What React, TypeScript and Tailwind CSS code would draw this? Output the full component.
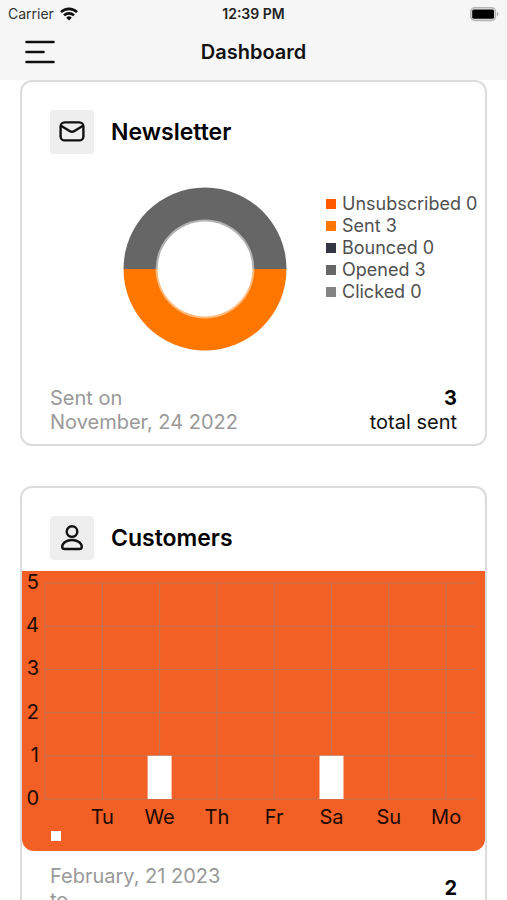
import type { ReactNode } from "react";

const legend = [
  { label: "Unsubscribed", value: 0, swatch: "bg-[#ff5a00]" },
  { label: "Sent", value: 3, swatch: "bg-[#ff7700]" },
  { label: "Bounced", value: 0, swatch: "bg-[#343741]" },
  { label: "Opened", value: 3, swatch: "bg-[#666666]" },
  { label: "Clicked", value: 0, swatch: "bg-[#838383]" },
];

const days = [
  { day: "Tu", count: 0 },
  { day: "We", count: 1 },
  { day: "Th", count: 0 },
  { day: "Fr", count: 0 },
  { day: "Sa", count: 1 },
  { day: "Su", count: 0 },
  { day: "Mo", count: 0 },
];

const chart = { left: 23, right: 454, top: 12, bottom: 228, max: 5 };
const columnStep = 57.3;

function columnX(index: number) {
  return chart.left + columnStep * index;
}

function valueY(value: number) {
  return chart.bottom - ((chart.bottom - chart.top) / chart.max) * value;
}

function StatusBar() {
  return (
    <div className="grid h-7 grid-cols-3 items-center px-2 text-[14px] leading-4">
      <div className="flex items-center gap-1.5 text-[#333]">
        <span>Carrier</span>
        <svg width="18" height="14" viewBox="0 0 18 14" fill="none" stroke="#111" strokeWidth="2.6" aria-label="Wi-Fi">
          <path d="M1 5.1a11.6 11.6 0 0 1 16 0" />
          <path d="M4 8.4a7.3 7.3 0 0 1 10 0" />
          <path d="M9 13.6 6.2 10.7a4 4 0 0 1 5.6 0Z" fill="#111" stroke="none" />
        </svg>
      </div>
      <span className="text-center font-semibold text-[#222]">12:39 PM</span>
      <svg className="justify-self-end" width="30" height="15" viewBox="0 0 30 15" aria-label="Battery full">
        <rect x="1.8" y="0.8" width="24.6" height="12.6" rx="4" fill="#eee" stroke="#b4b4b4" strokeWidth="1.6" />
        <rect x="3.2" y="2.4" width="21.8" height="9.4" rx="1.5" fill="#000" />
        <path d="M28 4.7a2.6 2.6 0 0 1 0 4.6Z" fill="#aaa" />
      </svg>
    </div>
  );
}

function NavBar() {
  return (
    <div className="grid h-[52px] grid-cols-[40px_1fr_40px] items-start px-5 pt-1">
      <button type="button" aria-label="Open menu" className="flex h-10 w-10 items-center justify-center">
        <svg width="30" height="24" viewBox="0 0 30 24" stroke="#111" strokeWidth="2.6" strokeLinecap="round">
          <path d="M1.5 2h27M1.5 12h17M1.5 22h27" />
        </svg>
      </button>
      <h1 className="text-center text-[20px] leading-10 font-semibold text-[#111]">Dashboard</h1>
    </div>
  );
}

function CardHeader({ title, icon }: { title: string; icon: ReactNode }) {
  return (
    <div className="flex items-center gap-[17px] px-7 pt-7">
      <div className="flex size-11 items-center justify-center rounded bg-[#eeeeee]">{icon}</div>
      <h2 className="text-[23px] leading-7 font-semibold text-black">{title}</h2>
    </div>
  );
}

function EnvelopeIcon() {
  return (
    <svg width="26" height="22" viewBox="0 0 26 22" fill="none" stroke="#111" strokeWidth="2.4" strokeLinejoin="round" aria-hidden="true">
      <rect x="1.6" y="1.4" width="22.8" height="18" rx="4" />
      <path d="M2.4 5 10.6 10a4.6 4.6 0 0 0 4.8 0L23.6 5" />
    </svg>
  );
}

function PersonIcon() {
  return (
    <svg width="24" height="26" viewBox="0 0 24 26" fill="none" stroke="#111" strokeWidth="2.4" aria-hidden="true">
      <circle cx="12" cy="6.6" r="5.3" />
      <path d="M12 15c-5.3 0-9.8 3.3-9.8 6.8 0 1.4.9 2.2 2.3 2.2h15c1.4 0 2.3-.8 2.3-2.2 0-3.5-4.5-6.8-9.8-6.8Z" />
    </svg>
  );
}

function NewsletterCard() {
  return (
    <section className="rounded-xl border-2 border-[#dcdcdc] bg-white">
      <CardHeader title="Newsletter" icon={<EnvelopeIcon />} />
      <div className="flex justify-between pt-[33px] pr-2.5 pl-[101px]">
        <svg width="164" height="164" viewBox="0 0 164 164" role="img" aria-label="Newsletter breakdown">
          <path d="M0.5 82a81.5 81.5 0 0 1 163 0Z" fill="#666666" />
          <path d="M0.5 82a81.5 81.5 0 0 0 163 0Z" fill="#ff7700" />
          <circle cx="82" cy="82" r="49.4" fill="#fff" fillOpacity="0.5" />
          <circle cx="82" cy="82" r="47.4" fill="#fff" />
        </svg>
        <ul className="w-[149px] pt-1.5 text-[18px] leading-[22px] text-[#505050]">
          {legend.map((item) => (
            <li key={item.label} className="flex items-center gap-1.5 whitespace-nowrap">
              <span className={`size-2.5 shrink-0 ${item.swatch}`} />
              {item.label} {item.value}
            </li>
          ))}
        </ul>
      </div>
      <div className="flex justify-between px-7 pt-[35px] pb-2.5 text-[20px] leading-6">
        <p className="text-[#999999]">
          Sent on
          <br />
          November, 24 2022
        </p>
        <p className="text-right text-[#111]">
          <strong className="font-bold text-black">3</strong>
          <br />
          total sent
        </p>
      </div>
    </section>
  );
}

function CustomersChart() {
  return (
    <svg viewBox="0 0 463 280" className="block w-full rounded-b-xl bg-[#f36025]" role="img" aria-label="Customers per day">
      <g stroke="#a58070" strokeOpacity="0.65" strokeWidth="1">
        {[0, 1, 2, 3, 4, 5].map((value) => (
          <line key={value} x1={chart.left} x2={chart.right} y1={valueY(value)} y2={valueY(value)} />
        ))}
        {[0, 1, 2, 3, 4, 5, 6, 7].map((index) => (
          <line key={index} x1={columnX(index)} x2={columnX(index)} y1={chart.top} y2={chart.bottom} />
        ))}
      </g>
      <g className="text-[20px]" fill="#200a02" textAnchor="end">
        {[0, 1, 2, 3, 4, 5].map((value) => (
          <text key={value} x="17" y={valueY(value) + 6}>
            {value}
          </text>
        ))}
      </g>
      <g className="text-[20px]" fill="#200a02" textAnchor="middle">
        {days.map(({ day }, index) => (
          <text key={day} x={columnX(index + 1)} y="253">
            {day}
          </text>
        ))}
      </g>
      <g fill="#fff">
        {days.map(({ day, count }, index) =>
          count > 0 ? (
            <rect key={day} x={columnX(index + 1) - 12} y={valueY(count)} width="24" height={chart.bottom - valueY(count)} />
          ) : null,
        )}
        <rect x="29" y="260" width="10" height="10" />
      </g>
    </svg>
  );
}

function CustomersCard() {
  return (
    <section className="rounded-xl border-2 border-[#dcdcdc] bg-white">
      <CardHeader title="Customers" icon={<PersonIcon />} />
      <div className="pt-[11px]">
        <CustomersChart />
      </div>
      <div className="flex items-center justify-between px-7 pt-[13px] pb-9 text-[20px] leading-6">
        <p className="text-[#999999]">
          February, 21 2023
          <br />
          to
        </p>
        <strong className="font-bold text-black">2</strong>
      </div>
    </section>
  );
}

export default function App() {
  return (
    <div className="flex h-screen flex-col bg-white font-['Inter','Liberation_Sans',sans-serif]">
      <header className="shrink-0 bg-[#f6f6f6]">
        <StatusBar />
        <NavBar />
      </header>
      <main className="flex min-h-0 flex-1 flex-col gap-10 overflow-y-auto px-5 [scrollbar-width:none] *:shrink-0">
        <NewsletterCard />
        <CustomersCard />
      </main>
    </div>
  );
}
